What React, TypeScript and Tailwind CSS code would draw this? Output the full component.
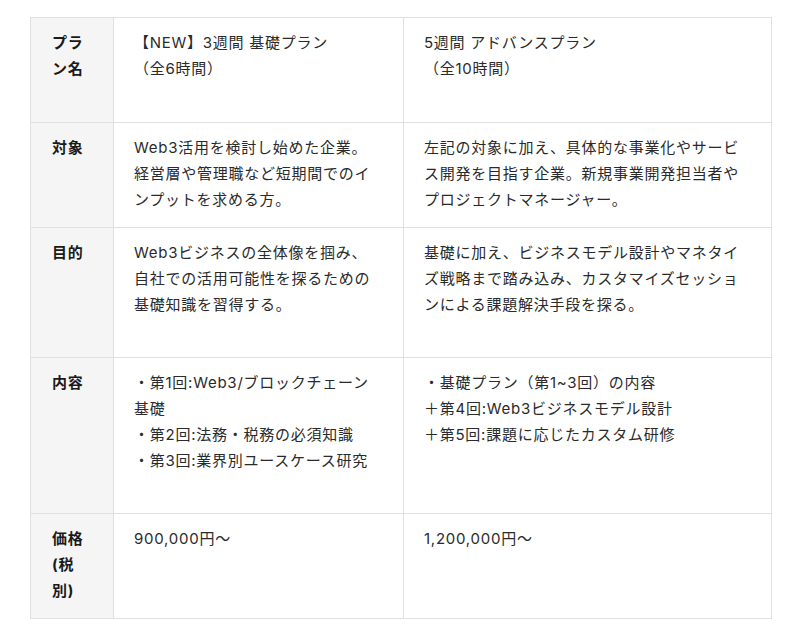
import React from "react";

type Row = {
  head: string[];
  a: string[];
  b: string[];
};

const rows: Row[] = [
  {
    head: ["プラ", "ン名"],
    a: ["【NEW】3週間 基礎プラン", "（全6時間）"],
    b: ["5週間 アドバンスプラン", "（全10時間）"],
  },
  {
    head: ["対象"],
    a: ["Web3活用を検討し始めた企業。", "経営層や管理職など短期間でのイ", "ンプットを求める方。"],
    b: [
      "左記の対象に加え、具体的な事業化やサービ",
      "ス開発を目指す企業。新規事業開発担当者や",
      "プロジェクトマネージャー。",
    ],
  },
  {
    head: ["目的"],
    a: ["Web3ビジネスの全体像を掴み、", "自社での活用可能性を探るための", "基礎知識を習得する。"],
    b: [
      "基礎に加え、ビジネスモデル設計やマネタイ",
      "ズ戦略まで踏み込み、カスタマイズセッショ",
      "ンによる課題解決手段を探る。",
    ],
  },
  {
    head: ["内容"],
    a: [
      "・第1回:Web3/ブロックチェーン",
      "基礎",
      "・第2回:法務・税務の必須知識",
      "・第3回:業界別ユースケース研究",
    ],
    b: ["・基礎プラン（第1~3回）の内容", "＋第4回:Web3ビジネスモデル設計", "＋第5回:課題に応じたカスタム研修"],
  },
  {
    head: ["価格", "(税", "別)"],
    a: ["900,000円〜"],
    b: ["1,200,000円〜"],
  },
];

function Lines({ lines }: { lines: string[] }) {
  return (
    <>
      {lines.map((l, i) => (
        <div key={i} className="whitespace-nowrap">
          {l}
        </div>
      ))}
    </>
  );
}

export default function App() {
  return (
    <div className="min-h-[643px] w-[795px] bg-white pt-[17px] pl-[30px]">
      <div
        className="grid w-[742px] grid-cols-[83px_290px_368px] grid-rows-[105px_105px_130px_156px_105px] border-l border-t border-[#e0e0e0] text-[15px] leading-[26px] tracking-[0.05em] text-[#2a2a2a]"
        style={{ fontFamily: 'Inter, "Noto Sans CJK JP", sans-serif' }}
      >
        {rows.map((r, i) => (
          <React.Fragment key={i}>
            <div className="border-b border-r border-[#e0e0e0] bg-[#f5f5f5] pl-[21px] pr-[19px] pt-[12px] font-bold text-[#1a1a1a]">
              <Lines lines={r.head} />
            </div>
            <div className="border-b border-r border-[#e0e0e0] pl-[20px] pr-[20px] pt-[12px]">
              <Lines lines={r.a} />
            </div>
            <div className="border-b border-r border-[#e0e0e0] pl-[20px] pr-[20px] pt-[12px]">
              <Lines lines={r.b} />
            </div>
          </React.Fragment>
        ))}
      </div>
    </div>
  );
}
